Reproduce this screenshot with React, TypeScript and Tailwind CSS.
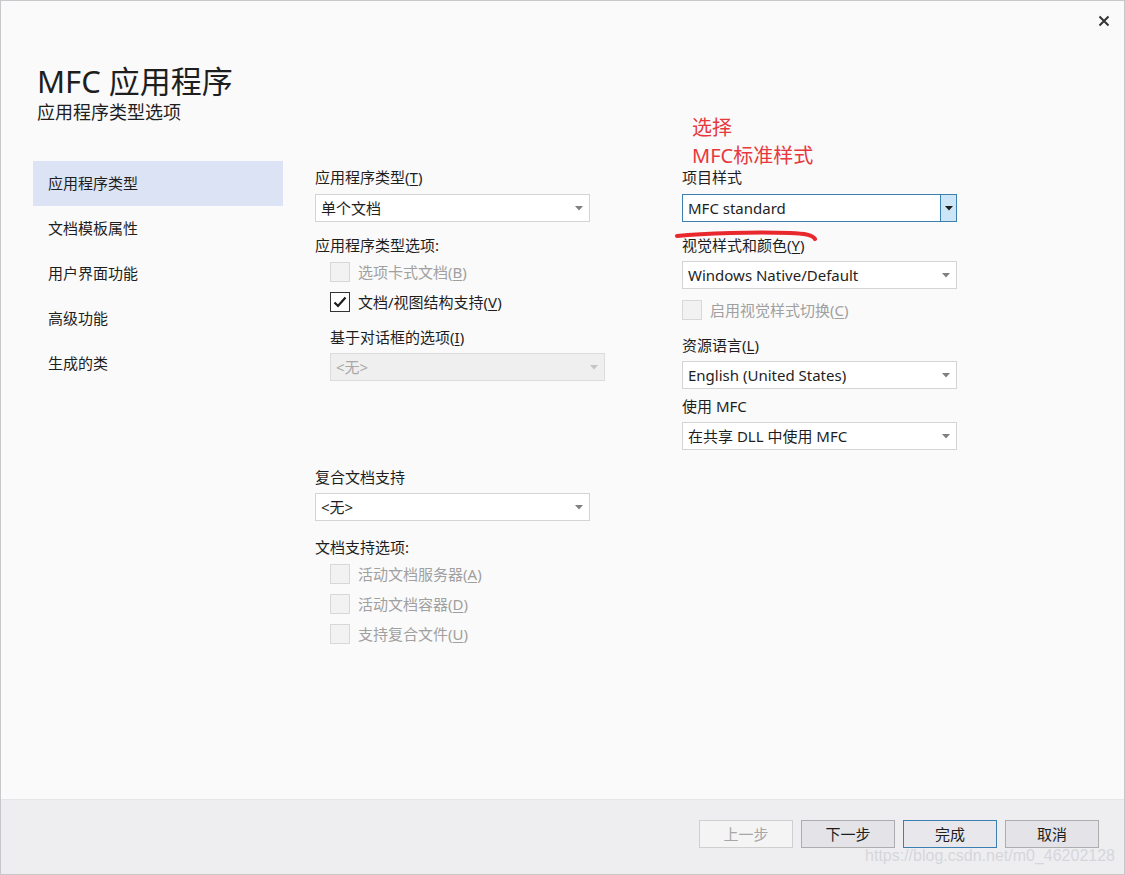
const font = "font-['Noto_Sans','Noto_Sans_CJK_SC',sans-serif]";

function Arrow({ color = "#707070" }: { color?: string }) {
  return (
    <svg width="8" height="5" viewBox="0 0 8 5">
      <path d="M0 0 L8 0 L4 4.5 Z" fill={color} />
    </svg>
  );
}

function Select({
  value,
  disabled,
  focused,
  className = "",
}: {
  value: string;
  disabled?: boolean;
  focused?: boolean;
  className?: string;
}) {
  if (focused) {
    return (
      <div
        className={`flex h-[28px] w-[275px] items-stretch border border-[#3c7fb1] bg-white ${className}`}
      >
        <div className="flex flex-1 items-center pl-[5px] text-[15px] text-[#1e1e1e]">{value}</div>
        <div className="flex w-[16px] items-center justify-center border-l border-[#3c7fb1] bg-[#cde6f7]">
          <Arrow color="#1e1e1e" />
        </div>
      </div>
    );
  }
  return (
    <div
      className={`flex h-[28px] w-[275px] items-center justify-between border pl-[5px] pr-[6px] text-[15px] ${
        disabled
          ? "border-[#dcdcdc] bg-[#efefef] text-[#a8a8a8]"
          : "border-[#d4d4d4] bg-white text-[#1e1e1e]"
      } ${className}`}
    >
      <span>{value}</span>
      <Arrow color={disabled ? "#c4c4c4" : "#808080"} />
    </div>
  );
}

function Check({
  label,
  u,
  checked,
  disabled,
  className = "",
}: {
  label: string;
  u: string;
  checked?: boolean;
  disabled?: boolean;
  className?: string;
}) {
  return (
    <div className={`flex h-[20px] items-center ${className}`}>
      <div
        className={`flex h-[20px] w-[20px] items-center justify-center border ${
          disabled ? "border-[#d8d8d8] bg-[#f2f2f2]" : "border-[#333] bg-white"
        }`}
      >
        {checked && (
          <svg width="14" height="12" viewBox="0 0 14 12">
            <path d="M1.5 6.5 L5 10 L12.5 1.5" fill="none" stroke="#1a1a1a" strokeWidth="2.2" />
          </svg>
        )}
      </div>
      <span className={`ml-[8px] text-[15px] ${disabled ? "text-[#a0a0a0]" : "text-[#1e1e1e]"}`}>
        {label}(<span className="underline underline-offset-2">{u}</span>)
      </span>
    </div>
  );
}

function Label({ children, className = "" }: { children: React.ReactNode; className?: string }) {
  return <div className={`h-[20px] text-[15px] leading-[20px] text-[#1e1e1e] ${className}`}>{children}</div>;
}

function U({ c }: { c: string }) {
  return (
    <>
      (<span className="underline underline-offset-2">{c}</span>)
    </>
  );
}

function Button({
  children,
  disabled,
  primary,
}: {
  children: React.ReactNode;
  disabled?: boolean;
  primary?: boolean;
}) {
  return (
    <div
      className={`flex h-[28px] w-[94px] items-center justify-center border text-[15px] ${
        disabled
          ? "border-[#cfcfcf] bg-[#f4f4f4] text-[#a6a6a6]"
          : primary
          ? "border-[#3c7fb1] bg-[#e8e8ec] text-[#1e1e1e]"
          : "border-[#adadad] bg-[#e4e4e8] text-[#1e1e1e]"
      }`}
    >
      {children}
    </div>
  );
}

export default function App() {
  const nav = ["应用程序类型", "文档模板属性", "用户界面功能", "高级功能", "生成的类"];
  return (
    <div
      className={`relative flex h-[875px] w-[1125px] flex-col border border-[#c8c8cc] bg-[#fafafa] ${font}`}
    >
      {/* close */}
      <div className="absolute right-[14px] top-[14px]">
        <svg width="12" height="12" viewBox="0 0 12 12">
          <path d="M1.5 1.5 L10.5 10.5 M10.5 1.5 L1.5 10.5" stroke="#333" strokeWidth="2" />
        </svg>
      </div>

      <div className="flex-1">
        <div className="pl-[36px] pt-[62px]">
          <div className="h-[36px] text-[31px] leading-[36px] text-[#1e1e1e]">MFC 应用程序</div>
          <div className="mt-[1px] h-[24px] text-[18px] leading-[24px] text-[#1e1e1e]">应用程序类型选项</div>
        </div>

        <div className="mt-[37px] flex">
          {/* nav */}
          <div className="ml-[32px] w-[250px]">
            {nav.map((n, i) => (
              <div
                key={n}
                className={`flex h-[45px] items-center pl-[15px] text-[15px] text-[#1e1e1e] ${
                  i === 0 ? "h-[44px] bg-[#dce3f5]" : ""
                }`}
              >
                {n}
              </div>
            ))}
          </div>

          {/* middle */}
          <div className="ml-[32px] w-[292px] pt-[6px]">
            <Label>
              应用程序类型<U c="T" />
            </Label>
            <Select value="单个文档" className="mt-[7px]" />
            <Label className="mt-[13px]">应用程序类型选项:</Label>
            <div className="pl-[15px]">
              <Check label="选项卡式文档" u="B" disabled className="mt-[7px]" />
              <Check label="文档/视图结构支持" u="V" checked className="mt-[10px]" />
              <Label className="mt-[15px]">
                基于对话框的选项<U c="I" />
              </Label>
              <Select value="<无>" disabled className="mt-[6px]" />
            </div>
            <Label className="mt-[86px]">复合文档支持</Label>
            <Select value="<无>" className="mt-[6px]" />
            <Label className="mt-[16px]">文档支持选项:</Label>
            <div className="pl-[15px]">
              <Check label="活动文档服务器" u="A" disabled className="mt-[7px]" />
              <Check label="活动文档容器" u="D" disabled className="mt-[10px]" />
              <Check label="支持复合文件" u="U" disabled className="mt-[10px]" />
            </div>
          </div>

          {/* right */}
          <div className="relative ml-[75px] w-[275px] pt-[6px]">
            <div className="absolute -top-[43px] left-[10px] flex flex-col gap-[8px] text-[20px] leading-[20px] text-[#e8383d]">
              <div>选择</div>
              <div>MFC标准样式</div>
            </div>
            <Label>项目样式</Label>
            <Select value="MFC standard" focused className="mt-[7px]" />
            <svg className="absolute left-[-7px] top-[69px]" width="150" height="14" viewBox="0 0 150 14">
              <path
                d="M2 6 C30 3, 80 2, 115 3 C130 3.5, 138 5, 140 9"
                fill="none"
                stroke="#e8282d"
                strokeWidth="4"
                strokeLinecap="round"
              />
            </svg>
            <Label className="mt-[13px]">
              视觉样式和颜色<U c="Y" />
            </Label>
            <Select value="Windows Native/Default" className="mt-[6px]" />
            <Check label="启用视觉样式切换" u="C" disabled className="mt-[11px]" />
            <Label className="mt-[15px]">
              资源语言<U c="L" />
            </Label>
            <Select value="English (United States)" className="mt-[6px]" />
            <Label className="mt-[7px]">使用 MFC</Label>
            <Select value="在共享 DLL 中使用 MFC" className="mt-[6px]" />
          </div>
        </div>
      </div>

      {/* bottom bar */}
      <div className="relative flex h-[75px] items-start justify-end gap-[8px] border-t border-[#e6e6ea] bg-[#eeeef1] pr-[25px] pt-[20px]">
        <Button disabled>上一步</Button>
        <Button>下一步</Button>
        <Button primary>完成</Button>
        <Button>取消</Button>
        <div className="absolute bottom-[6px] right-[9px] font-['Liberation_Sans',sans-serif] text-[16px] text-[#d6d6da]">
          https://blog.csdn.net/m0_46202128
        </div>
      </div>
    </div>
  );
}
